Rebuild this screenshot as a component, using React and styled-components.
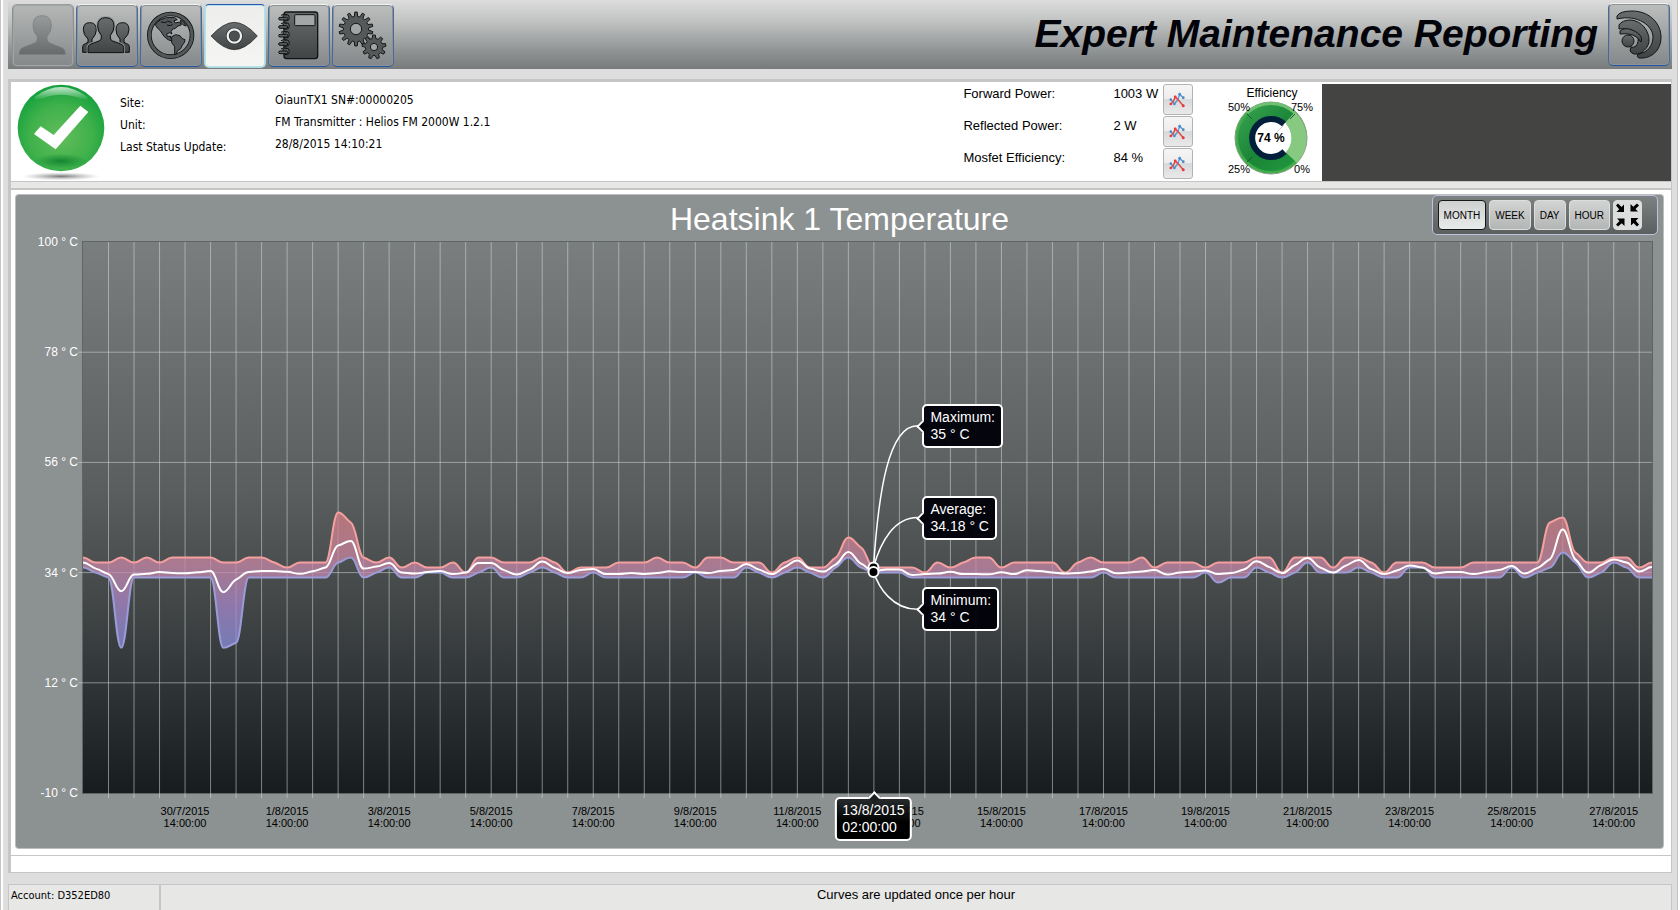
import React from 'react'
import styled, { createGlobalStyle } from 'styled-components'

const GlobalStyle = createGlobalStyle`
  * {
    box-sizing: border-box;
  }

  body {
    margin: 0;
    background: #dedede;
    color: #000;
    font-family: "Liberation Sans", Arial, sans-serif;
    font-size: 13px;
  }

  button {
    font-family: inherit;
    margin: 0;
  }
`;

const Page = styled.div`
  display: flex;
  flex-direction: column;
  min-height: 100vh;
  padding: 0 6px 0 7px;
  border-left: 1px solid #c4c4c4;
  border-right: 2px solid #fff;
  box-shadow: inset 2px 0 #fff, inset -1px 0 #c4c4c4;
`;

const TopBar = styled.header`
  display: flex;
  justify-content: space-between;
  align-items: flex-start;
  height: 69px;
  padding: 3px 2px 0 4px;
  background: linear-gradient(#dcdddc 0%, #c2c4c3 30%, #929596 72%, #777b7b 100%);
`;

const Nav = styled.nav`
  display: flex;
  gap: 2px;
  padding-top: 1px;
`;

const Brand = styled.div`
  display: flex;
  gap: 10px;
`;

const BrandTitle = styled.h1`
  margin: 0;
  padding-top: 9px;
  color: #03030a;
  font-size: 39px;
  font-style: italic;
  font-weight: bold;
  line-height: 44px;
`;

const ToolButton = styled.button`
  width: 62px;
  height: ${({ $active }) => ($active ? 64 : 63)}px;
  padding: 0;
  border: 1px solid;
  border-color: ${({ $active, disabled }) => {
    if (disabled) return '#9b9e9e #8b8f8f #85898a';
    return $active ? '#2a56ad #a8dbe2 #a8dbe2' : '#f2f2f2 #466a9d #2454a6';
  }};
  border-radius: 5px;
  background: ${({ $active, disabled }) => {
    if (disabled) return 'linear-gradient(#b5b7b6, #85898a)';
    return $active ? 'linear-gradient(#ededec, #f5f5f4)' : 'linear-gradient(#bcbebd, #84888a)';
  }};
  box-shadow: inset 0 0 0 1px ${({ $active, disabled }) => {
    if (disabled) return '#a2a5a5';
    return $active ? '#b4e2e8' : '#8d9294';
  }};

  svg {
    display: block;
    width: 60px;
    height: 60px;
  }
`;

const Panel = styled.main`
  flex: 1;
  display: flex;
  flex-direction: column;
  margin: 10px 0 11px;
  border: solid #c5c6c5;
  border-width: 3px 1px 1px 3px;
  background: #fff;
`;

const Status = styled.section`
  display: flex;
  height: 100px;
  padding-top: 2px;
  border-bottom: 1px solid #c5c6c5;
`;

const StatusIcon = styled.svg`
  flex: none;
  width: 100px;
  height: 97px;
`;

const Info = styled.dl`
  display: grid;
  grid-template-columns: 155px 1fr;
  grid-auto-rows: 22px;
  align-items: center;
  flex: 1;
  margin: 0;
  padding: 6px 0 0 9px;
  font-family: "DejaVu Sans Condensed", "DejaVu Sans", Tahoma, sans-serif;
  font-size: 12px;
  font-stretch: condensed;

  dt {
    padding-top: 4px;
  }

  dd {
    margin: 0;
    padding-bottom: 2px;
  }
`;

const Metrics = styled.dl`
  display: grid;
  grid-template-columns: 150px 50px 59px;
  grid-auto-rows: 32px;
  margin: 0;

  dt,
  dd {
    margin: 0;
    padding-top: 2px;
    white-space: nowrap;
  }
`;

const CurveButton = styled.button`
  width: 30px;
  height: 31px;
  padding: 5px;
  border: 1px solid #b3b3b3;
  border-radius: 3px;
  background: linear-gradient(#f5f5f5 0%, #ececec 49%, #d8d9da 50%, #e9e9e9 100%);

  svg {
    display: block;
    width: 16px;
    height: 18px;
  }
`;

const Gauge = styled.svg`
  flex: none;
  width: 100px;
  height: 97px;
  margin-top: -1px;
`;

const Filler = styled.div`
  width: 21%;
  background: #444443;
`;

const Splitter = styled.div`
  flex: none;
  height: 8px;
  border-bottom: 2px solid #c5c6c5;
  background: #e7e7e6;
`;

const Chart = styled.section`
  flex: 1;
  display: flex;
  flex-direction: column;
  margin: 5px 8px 7px 5px;
  border-radius: 3px;
  background: #8c9191;
  box-shadow: 0 0 0 1px #bcbebd;
`;

const ChartHeader = styled.div`
  display: grid;
  grid-template-columns: 1fr auto 1fr;
  height: 47px;
  padding: 0 5px;
`;

const ChartTitle = styled.h2`
  grid-column: 2;
  margin: 0;
  padding-top: 6px;
  color: #fff;
  font-size: 32px;
  font-weight: normal;
  line-height: 36px;
`;

const Ranges = styled.div`
  display: flex;
  justify-self: end;
  gap: 3px;
  height: 40px;
  padding: 4px 15px 4px 5px;
  border: 1px solid #bfc0da;
  border-radius: 5px;
  background: linear-gradient(#7d8182, #5b5f60);
`;

const RangeButton = styled.button`
  min-width: 29px;
  height: 30px;
  padding: 0 5px;
  border: 1px solid ${({ $active }) => ($active ? '#16191a' : '#dcdddd')};
  border-radius: 4px;
  background: ${({ $active }) => ($active
    ? 'linear-gradient(#cfd1d1, #e9eaea)'
    : 'linear-gradient(#d2d3d3, #b4b6b6)')};
  color: #000;
  font-size: 10px;
`;

const FitButton = styled(RangeButton)`
  padding: 0 1px;
  background: #dcdddd;

  svg {
    display: block;
    width: 25px;
    height: 26px;
  }
`;

const ChartBody = styled.div`
  flex: 1;
  display: grid;
  grid-template-columns: 62px 1fr;
  column-gap: 5px;
  padding-right: 11px;
  min-height: 300px;
`;

const YAxis = styled.div`
  display: flex;
  flex-direction: column;
  justify-content: space-between;
  margin: -7px 0;
  color: #fff;
  font-size: 12px;
  line-height: 14px;
  text-align: right;
`;

const Plot = styled.div`
  position: relative;
  background: linear-gradient(#7a7e7e 0%, #5a5e5f 45%, #434748 65%, #171c1f 100%);
  box-shadow: 0 0 0 1px #606464;

  > svg {
    position: absolute;
    width: 100%;
    height: 100%;
    overflow: visible;
  }
`;

const XAxis = styled.div`
  padding: 12px 11px 0 67px;
  height: 55px;
`;

const XLabels = styled.div`
  display: grid;
  grid-template-columns: repeat(15, 1fr);
  width: 97.56%;
  margin-left: 3.25%;
  font-size: 11px;
  line-height: 12px;
  text-align: center;
`;

const Callout = styled.div`
  position: absolute;
  left: ${({ $x }) => $x}%;
  top: ${({ $y }) => $y}%;
  padding: 3px 6px;
  border: 2px solid #fff;
  border-radius: 5px;
  background: rgba(0, 0, 8, 0.95);
  color: #fff;
  font-size: 14px;
  line-height: 17px;
  white-space: nowrap;
  transform: translate(5px, -50%);

  &::before {
    content: "";
    position: absolute;
    left: -6px;
    top: 16px;
    width: 7px;
    height: 7px;
    border: solid #fff;
    border-width: 0 0 2px 2px;
    background: #000008;
    transform: rotate(45deg);
  }
`;

const DateCallout = styled(Callout)`
  padding: 3px 5px;
  background: linear-gradient(rgba(28, 32, 34, 0.9), #000 60%);
  transform: translate(-50%, 4px);

  &::before {
    left: 50%;
    top: -6px;
    margin-left: -4px;
    border-width: 2px 0 0 2px;
    background: #1c2022;
  }
`;

const Strip = styled.div`
  flex: none;
  height: 17px;
  border-top: 1px solid #c5c6c5;
`;

const Footer = styled.footer`
  display: grid;
  grid-template-columns: 152px 1fr;
  height: 26px;
  border: 1px solid #c5c6c5;
  border-bottom: 0;
  background: #e7e7e6;
  line-height: 19px;
`;

const Account = styled.div`
  padding: 1px 0 0 2px;
  border-right: 2px solid #c5c6c5;
  font-family: "DejaVu Sans Condensed", "DejaVu Sans", Tahoma, sans-serif;
  font-size: 11px;
  font-stretch: condensed;
`;

const Message = styled.div`
  text-align: center;
`;

// maximum, average and minimum temperature, one sample every six hours
const maximum = [
  37, 36, 36, 37, 36, 37, 36, 37, 37, 37, 37, 36, 36, 37, 37, 36, 35, 36, 36, 36, 46, 44, 37, 36, 37,
  35, 36, 35, 35, 36, 34, 37, 37, 36, 36, 36, 37, 36, 34, 35, 35, 35, 36, 36, 36, 37, 36, 36, 35, 37,
  37, 36, 36, 36, 34, 36, 37, 35, 35, 37, 41, 39, 35, 35, 35, 35, 34, 36, 35, 36, 37, 37, 35, 36, 36,
  36, 36, 34, 36, 37, 36, 36, 36, 37, 35, 36, 36, 36, 35, 36, 36, 36, 37, 37, 34, 37, 37, 37, 35, 37,
  37, 36, 34, 36, 36, 36, 35, 35, 35, 36, 36, 36, 36, 36, 36, 44, 45, 38, 36, 36, 37, 37, 35, 36,
];
const average = [
  36, 34.8, 33.7, 30.3, 33.6, 33.75, 34.1, 33.9, 33.85, 34.05, 34.3, 30.1, 32.6, 34.1, 34.3, 34.3,
  34.15, 33.75, 34.25, 35, 39.4, 40.3, 34.8, 35.2, 35.9, 34, 33.8, 34.1, 34.3, 33.7, 34, 35.9, 35.9,
  34.5, 33.6, 34.6, 36.2, 34.9, 33.9, 34.5, 34.7, 33.7, 33.7, 33.9, 33.7, 33.9, 34.25, 34.1, 34.1,
  33.9, 34.3, 34.5, 35.7, 34.6, 33.7, 35.1, 36.4, 34.8, 34.2, 35.6, 38.1, 35.8, 34.3, 34.6, 34.6,
  33.5, 33.7, 33.8, 34.15, 33.7, 33.7, 33.65, 34.05, 33.7, 34.45, 34.3, 34, 33.8, 33.9, 34.2, 34.7,
  33.85, 34, 34.2, 34.5, 33.6, 34, 34.2, 34.4, 33.7, 33.9, 34.6, 36.25, 35.1, 33.9, 35.5, 36.9, 35,
  34, 35.4, 36.5, 34.7, 33.7, 34.4, 35.4, 35, 33.8, 34.1, 34.1, 33.7, 34.1, 34.5, 35.3, 33.8, 34.9,
  36.7, 42.6, 36.6, 34, 35.5, 36.6, 36, 34.2, 35.1,
];
const minimum = [
  35, 34, 33, 19, 33, 33, 33, 33, 33, 33, 33, 19, 20, 33, 33, 33, 33, 33, 33, 33, 36, 37, 33, 34, 35,
  33, 33, 34, 34, 33, 33, 34, 35, 33, 33, 34, 35, 34, 33, 33, 34, 33, 33, 33, 33, 33, 33, 33, 34, 33,
  33, 33, 35, 34, 33, 34, 35, 34, 33, 35, 37, 35, 34, 34, 34, 33, 33, 33, 33, 33, 33, 33, 33, 33, 33,
  33, 33, 33, 33, 33, 34, 33, 33, 33, 33, 33, 33, 33, 34, 32, 33, 33, 35, 34, 33, 34, 36, 34, 34, 34,
  35, 34, 33, 33, 35, 35, 33, 33, 33, 33, 33, 33, 35, 33, 34, 35, 38, 36, 33, 34, 36, 35, 33, 33,
];

const WIDTH = 1570;
const HEIGHT = 552;
const STEP = WIDTH / (average.length - 1);
const toX = (i) => i * STEP;
const toY = (v) => ((100 - v) / 110) * HEIGHT;

// tangents of a monotone cubic, softened so that the samples read as small shelves
const slope = (values, i) => {
  const before = values[i] - values[i - 1];
  const after = values[i + 1] - values[i];
  if (!(before * after > 0)) return 0;
  return Math.sign(before) * Math.min(Math.abs(before), Math.abs(after)) * 0.7;
};

const curve = (values, reverse = false) => {
  const points = values.map((v, i) => ({ x: toX(i), y: toY(v), v, m: slope(values, i) }));
  const list = reverse ? points.reverse() : points;
  const dir = reverse ? -1 : 1;
  const k = 0.42;
  return list.slice(1).map((p, n) => {
    const q = list[n];
    const c1 = `${q.x + dir * STEP * k} ${toY(q.v + dir * q.m * k)}`;
    const c2 = `${p.x - dir * STEP * k} ${toY(p.v - dir * p.m * k)}`;
    return `C${c1} ${c2} ${p.x} ${p.y}`;
  }).join(' ');
};

const line = (values) => `M0 ${toY(values[0])} ${curve(values)}`;
const band = `${line(maximum)} L${WIDTH} ${toY(minimum[minimum.length - 1])} ${curve(minimum, true)}Z`;

const gridX = Array.from({ length: 61 }, (_, i) => toX((i + 1) * 2));
const gridY = [78, 56, 34, 12].map(toY);

const yLabels = ['100 ° C', '78 ° C', '56 ° C', '34 ° C', '12 ° C', '-10 ° C'];
const xLabels = [
  '30/7', '1/8', '3/8', '5/8', '7/8', '9/8', '11/8', '13/8', '15/8', '17/8', '19/8', '21/8', '23/8',
  '25/8', '27/8',
];

const callouts = [
  { label: 'Maximum:', value: '35 ° C', y: 184 },
  { label: 'Average:', value: '34.18 ° C', y: 276 },
  { label: 'Minimum:', value: '34 ° C', y: 368 },
];

const metrics = [
  { label: 'Forward Power:', value: '1003 W' },
  { label: 'Reflected Power:', value: '2 W' },
  { label: 'Mosfet Efficiency:', value: '84 %' },
];

const gear = (cx, cy, inner, outer, teeth) => {
  const step = (Math.PI * 2) / teeth;
  const at = (r, a) => `${(cx + r * Math.cos(a)).toFixed(1)} ${(cy + r * Math.sin(a)).toFixed(1)}`;
  return `M${Array.from({ length: teeth }, (_, i) => {
    const a = i * step - Math.PI / 2;
    return [
      at(inner, a - step * 0.3), at(outer, a - step * 0.16), at(outer, a + step * 0.16), at(inner, a + step * 0.3),
    ].join('L');
  }).join('L')}Z`;
};

const Ink = ({ id, top = '#686c6d', bottom = '#404445' }) => (
  <defs>
    <linearGradient id={id} x1="0" y1="0" x2="0" y2="1">
      <stop offset="0" stopColor={top}/>
      <stop offset="1" stopColor={bottom}/>
    </linearGradient>
  </defs>
);

const UserIcon = () => (
  <svg viewBox="38 20 180 180">
    <Ink id="user" top="#989b9b" bottom="#676b6c"/>
    <path
      fill="url(#user)" stroke="#73777a" strokeWidth="2"
      d="M57 165q0-15 8-19l36-14q10-4 10-12v-9q-13-14-13-32q0-30 27-30q28 0 28 30q0 18-13 32v9q0 8 10 12l36 14q9 4 9 19z"
    />
  </svg>
);

const UsersIcon = () => (
  <svg viewBox="230 20 180 180">
    <Ink id="users"/>
    <g fill="url(#users)" stroke="#0e1011" strokeWidth="3">
      <path d="M247 159v-18q1-6 8-8l8-4v-10q-14-12-14-28q0-21 19-21q20 0 20 21q0 16-13 28v10l14 8v22z"/>
      <path d="M387 159v-18q-1-6-8-8l-8-4v-10q15-12 15-28q0-21-19-21q-20 0-20 21q0 16 12 28v10l-14 8v22z"/>
      <path stroke="#94989a" strokeWidth="8" d="M263 160v-16q1-7 9-10l24-9q7-3 7-9v-8q-11-12-11-28q0-25 24-25q25 0 25 25q0 16-11 28v8q0 6 7 9l24 9q8 3 9 10v16z"/>
      <path d="M263 160v-16q1-7 9-10l24-9q7-3 7-9v-8q-11-12-11-28q0-25 24-25q25 0 25 25q0 16-11 28v8q0 6 7 9l24 9q8 3 9 10v16z"/>
    </g>
  </svg>
);

const GlobeIcon = () => (
  <svg viewBox="422 20 180 180">
    <circle cx="511" cy="108" r="64" fill="none" stroke="#111314" strokeWidth="14"/>
    <circle cx="511" cy="108" r="64" fill="none" stroke="#545859" strokeWidth="9"/>
    <g fill="#54585a" stroke="#141617" strokeWidth="3" strokeLinejoin="round">
      <path d="M466 73q12-14 32-18l24-1l9 7l-10 3l4 7l13-3l5 9l-10 3l-8 7l-8 2l-5 8l3 7l-7-4l-9 4l2 8l9-2l1 7l9 7l-3 2l-14-5l-12-10l-11-17l-9-8l-5-8z"/>
      <path d="M514 112l12-6l13 3l7 9l8 3q0 10-8 16l-5 11l-9 6l-5 12l-4-2v-22l-9-12z"/>
      <path d="M540 62l10 6l8 12l-8-2l-8-8z"/>
    </g>
    <path fill="none" stroke="#0d0f10" strokeWidth="3" d="M482 68l14 2l6-5l12 5M500 77l10 2l7-4"/>
  </svg>
);

const EyeIcon = () => (
  <svg viewBox="614 18 180 180">
    <Ink id="eye"/>
    <path fill="url(#eye)" stroke="#1b1d1e" strokeWidth="2" d="M632 108q38-41 70-41t69 41q-37 41-69 41t-70-41z"/>
    <circle cx="702" cy="108" r="20" fill="#4c5051" stroke="#1b1d1e" strokeWidth="10"/>
    <circle cx="702" cy="108" r="20" fill="none" stroke="#eee" strokeWidth="7"/>
  </svg>
);

const NotebookIcon = () => (
  <svg viewBox="806 20 180 180">
    <Ink id="notebook"/>
    <rect x="851" y="38" width="101" height="140" rx="8" fill="url(#notebook)" stroke="#111314" strokeWidth="4"/>
    <rect x="883" y="46" width="61" height="33" rx="3" fill="#a4a7a7" stroke="#111314" strokeWidth="3"/>
    {[55, 80, 106, 131, 156].map(y => (
      <g key={y} fill="#5c6061" stroke="#111314" strokeWidth="3">
        <circle cx="857" cy={y} r="10"/>
        <rect x="835" y={y - 1} width="27" height="8" rx="4"/>
        <path d="M842 -7q8-6 17 0" transform={`translate(0 ${y})`}/>
      </g>
    ))}
  </svg>
);

const GearsIcon = () => (
  <svg viewBox="998 20 180 180">
    <g fill="#55595a" stroke="#16191a" strokeWidth="3" strokeLinejoin="round">
      <path d={gear(1067, 89, 38, 51, 14)}/>
      <path d={gear(1121, 143, 26, 36, 9)}/>
    </g>
    <g fill="#a2a5a5" stroke="#16191a" strokeWidth="3">
      <circle cx="1067" cy="89" r="17"/>
      <circle cx="1121" cy="143" r="11"/>
    </g>
  </svg>
);

const WavesIcon = () => (
  <svg viewBox="1 1 60 60">
    <Ink id="waves"/>
    <g fill="url(#waves)" stroke="#121415" strokeWidth="1" strokeLinejoin="round">
      <path d="M9 12Q12 7 24 7C42 7 53 20 53 33C53 47 43 55 31 54Q28 53 30 50C40 49 45 41 45 33C45 22 30 10 9 15Z"/>
      <path d="M11 21Q14 16 23 16C34 17 41 27 41 36C41 42 37 46 33 49Q25 52 22 47L23 43Q25 44 28 42C34 34 27 23 11 25Z"/>
      <path d="M12 27Q17 23 24 26C32 29 35 34 33 38Q27 28 12 30Z"/>
      <ellipse cx="20" cy="37" rx="6" ry="6"/>
    </g>
  </svg>
);

const tools = [
  { name: 'Account', Icon: UserIcon, disabled: true },
  { name: 'Users', Icon: UsersIcon },
  { name: 'Sites', Icon: GlobeIcon },
  { name: 'Monitoring', Icon: EyeIcon, active: true },
  { name: 'Log', Icon: NotebookIcon },
  { name: 'Settings', Icon: GearsIcon },
];

const CurveIcon = () => (
  <svg viewBox="0 0 18 19" fill="none" strokeWidth="1.6">
    <path stroke="#5a9bd0" d="M2 9l4 5l4-5l2-6l4 4"/>
    <path stroke="#e04848" d="M2 14l3-3l2-5l4 4l5 6"/>
    <g fill="#4c8fc8">
      <circle cx="2" cy="9" r="1.5"/>
      <circle cx="6" cy="14" r="1.5"/>
      <circle cx="12" cy="3" r="1.6"/>
      <circle cx="16" cy="7" r="1.6"/>
    </g>
    <g fill="#e83a3a">
      <circle cx="2" cy="14" r="1.5"/>
      <circle cx="7" cy="6" r="1.6"/>
      <circle cx="16" cy="16" r="1.7"/>
    </g>
  </svg>
);

const FitIcon = () => (
  <svg viewBox="0 0 25 26">
    {[0, 90, 180, 270].map(angle => (
      <path key={angle} transform={`rotate(${angle} 12.5 13)`} d="M1 3.500L3 1.500L6.500 5L9 2.500V10H1.500L4.200 7.200Z"/>
    ))}
  </svg>
);

const Check = () => (
  <StatusIcon viewBox="0 0 300 291" role="img" aria-label="Status OK">
    <defs>
      <radialGradient id="ball" cx="0.5" cy="0.6" r="0.6">
        <stop offset="0" stopColor="#62bd5a"/>
        <stop offset="0.6" stopColor="#3fb14b"/>
        <stop offset="1" stopColor="#12a03c"/>
      </radialGradient>
      <linearGradient id="gloss" x1="0" y1="0" x2="0" y2="1">
        <stop offset="0" stopColor="#fff" stopOpacity="0.75"/>
        <stop offset="1" stopColor="#fff" stopOpacity="0"/>
      </linearGradient>
      <radialGradient id="shadow">
        <stop offset="0" stopColor="#555" stopOpacity="0.8"/>
        <stop offset="1" stopColor="#999" stopOpacity="0"/>
      </radialGradient>
      <radialGradient id="shade">
        <stop offset="0" stopColor="#087a2b" stopOpacity="0.8"/>
        <stop offset="1" stopColor="#087a2b" stopOpacity="0"/>
      </radialGradient>
    </defs>
    <ellipse cx="150" cy="277" rx="118" ry="12" fill="url(#shadow)"/>
    <circle cx="150" cy="132" r="130" fill="url(#ball)"/>
    <ellipse cx="150" cy="231" rx="80" ry="22" fill="url(#shade)"/>
    <path fill="url(#gloss)" d="M72 38q78-58 156 0q10 16-20 6q-58-24-116 0q-30 10-20-6z"/>
    <path fill="#fff" d="M69 150l20-23l39 26l80-88l24 19l-98 112z"/>
  </StatusIcon>
);

const EfficiencyGauge = () => (
  <Gauge viewBox="1224 83 100 97" role="img" aria-label="Efficiency 74 %">
    <defs>
      <linearGradient id="dial" x1="0" y1="0" x2="1" y2="1">
        <stop offset="0" stopColor="#3aa552"/>
        <stop offset="0.5" stopColor="#1a8537"/>
        <stop offset="1" stopColor="#239a41"/>
      </linearGradient>
    </defs>
    <circle cx="1273" cy="138" r="36" fill="#3fae49" stroke="#8b9c8b"/>
    <circle cx="1273" cy="138" r="33" fill="url(#dial)"/>
    <path fill="#87c981" d="M1273 138L1297 112A36 36 0 0 1 1299 163Z"/>
    <path fill="none" stroke="#6fbf72" strokeWidth="3" d="M1249 113A35 35 0 0 1 1297 113"/>
    <circle cx="1273" cy="138" r="21" fill="#fff"/>
    <path fill="#87c981" d="M1288 124A21 21 0 0 1 1288 152L1293 157A28 28 0 0 0 1293 119Z"/>
    <path fill="none" stroke="#02203a" strokeWidth="6" d="M1286.500 151.500A19 19 0 1 1 1286 124"/>
    <path stroke="#175c2c" d="M1249 114l5 5M1249 162l5-5M1297 114l-5 5"/>
    <path stroke="#ccc" d="M1278 133l8-8"/>
    <g fontSize="11" textAnchor="middle">
      <text x="1241" y="111">50%</text>
      <text x="1304" y="111">75%</text>
      <text x="1241" y="173">25%</text>
      <text x="1304" y="173">0%</text>
      <text x="1274" y="97" fontSize="12">Efficiency</text>
      <text x="1273" y="142" fontSize="12" fontWeight="bold">74 %</text>
    </g>
  </Gauge>
);

const Curves = () => (
  <svg viewBox={`0 0 ${WIDTH} ${HEIGHT}`} preserveAspectRatio="none" fill="none">
    <defs>
      <linearGradient id="band" gradientUnits="userSpaceOnUse" x1="0" y1="270" x2="0" y2="408">
        <stop offset="0" stopColor="#d67f84"/>
        <stop offset="0.4" stopColor="#c788a8"/>
        <stop offset="0.68" stopColor="#a888cc"/>
        <stop offset="1" stopColor="#8890dc"/>
      </linearGradient>
    </defs>
    <g stroke="#d5d9d9" strokeOpacity="0.55">
      {gridX.map(x => <path key={x} d={`M${x} 0V${HEIGHT + 5}`}/>)}
      {gridY.map(y => <path key={y} d={`M-5 ${y}H${WIDTH}`}/>)}
    </g>
    <path d={band} fill="url(#band)" fillOpacity="0.75"/>
    <path d={line(minimum)} stroke="#9a9cd8" strokeWidth="2"/>
    <path d={line(maximum)} stroke="#f5a09f" strokeWidth="2"/>
    <path d={line(average)} stroke="#fff" strokeWidth="2"/>
    <g stroke="#fff" strokeWidth="1.500">
      <path d="M791 326C796 250 806 184 835 184"/>
      <path d="M791 326C798 300 812 276 835 276"/>
      <path d="M791 330C796 346 810 368 835 368"/>
    </g>
    <g fill="#000" stroke="#fff" strokeWidth="2">
      <circle cx="791" cy="326" r="5"/>
      <circle cx="791" cy="330.500" r="5"/>
    </g>
  </svg>
);

const App = () => (
  <>
    <GlobalStyle/>
    <Page>
      <TopBar>
        <Nav>
          {tools.map(({ name, Icon, disabled, active }) => (
            <ToolButton key={name} aria-label={name} disabled={disabled} $active={active}>
              <Icon/>
            </ToolButton>
          ))}
        </Nav>
        <Brand>
          <BrandTitle>Expert Maintenance Reporting</BrandTitle>
          <ToolButton aria-label="Home"><WavesIcon/></ToolButton>
        </Brand>
      </TopBar>
      <Panel>
        <Status>
          <Check/>
          <Info>
            <dt>Site:</dt>
            <dd>OiaunTX1 SN#:00000205</dd>
            <dt>Unit:</dt>
            <dd>FM Transmitter : Helios FM 2000W 1.2.1</dd>
            <dt>Last Status Update:</dt>
            <dd>28/8/2015 14:10:21</dd>
          </Info>
          <Metrics>
            {metrics.map(({ label, value }) => (
              <React.Fragment key={label}>
                <dt>{label}</dt>
                <dd>{value}</dd>
                <CurveButton aria-label={`${label} curve`}><CurveIcon/></CurveButton>
              </React.Fragment>
            ))}
          </Metrics>
          <EfficiencyGauge/>
          <Filler/>
        </Status>
        <Splitter/>
        <Chart>
          <ChartHeader>
            <ChartTitle>Heatsink 1 Temperature</ChartTitle>
            <Ranges>
              <RangeButton $active>MONTH</RangeButton>
              <RangeButton>WEEK</RangeButton>
              <RangeButton>DAY</RangeButton>
              <RangeButton>HOUR</RangeButton>
              <FitButton aria-label="Fit"><FitIcon/></FitButton>
            </Ranges>
          </ChartHeader>
          <ChartBody>
            <YAxis>
              {yLabels.map(label => <span key={label}>{label}</span>)}
            </YAxis>
            <Plot>
              <Curves/>
              {callouts.map(({ label, value, y }) => (
                <Callout key={label} $x={(835 / WIDTH) * 100} $y={(y / HEIGHT) * 100}>
                  {label}<br/>{value}
                </Callout>
              ))}
              <DateCallout $x={(791 / WIDTH) * 100} $y={100}>
                13/8/2015<br/>02:00:00
              </DateCallout>
            </Plot>
          </ChartBody>
          <XAxis>
            <XLabels>
              {xLabels.map(day => <div key={day}>{day}/2015<br/>14:00:00</div>)}
            </XLabels>
          </XAxis>
        </Chart>
        <Strip/>
      </Panel>
      <Footer>
        <Account>Account: D352ED80</Account>
        <Message>Curves are updated once per hour</Message>
      </Footer>
    </Page>
  </>
);

export default App
